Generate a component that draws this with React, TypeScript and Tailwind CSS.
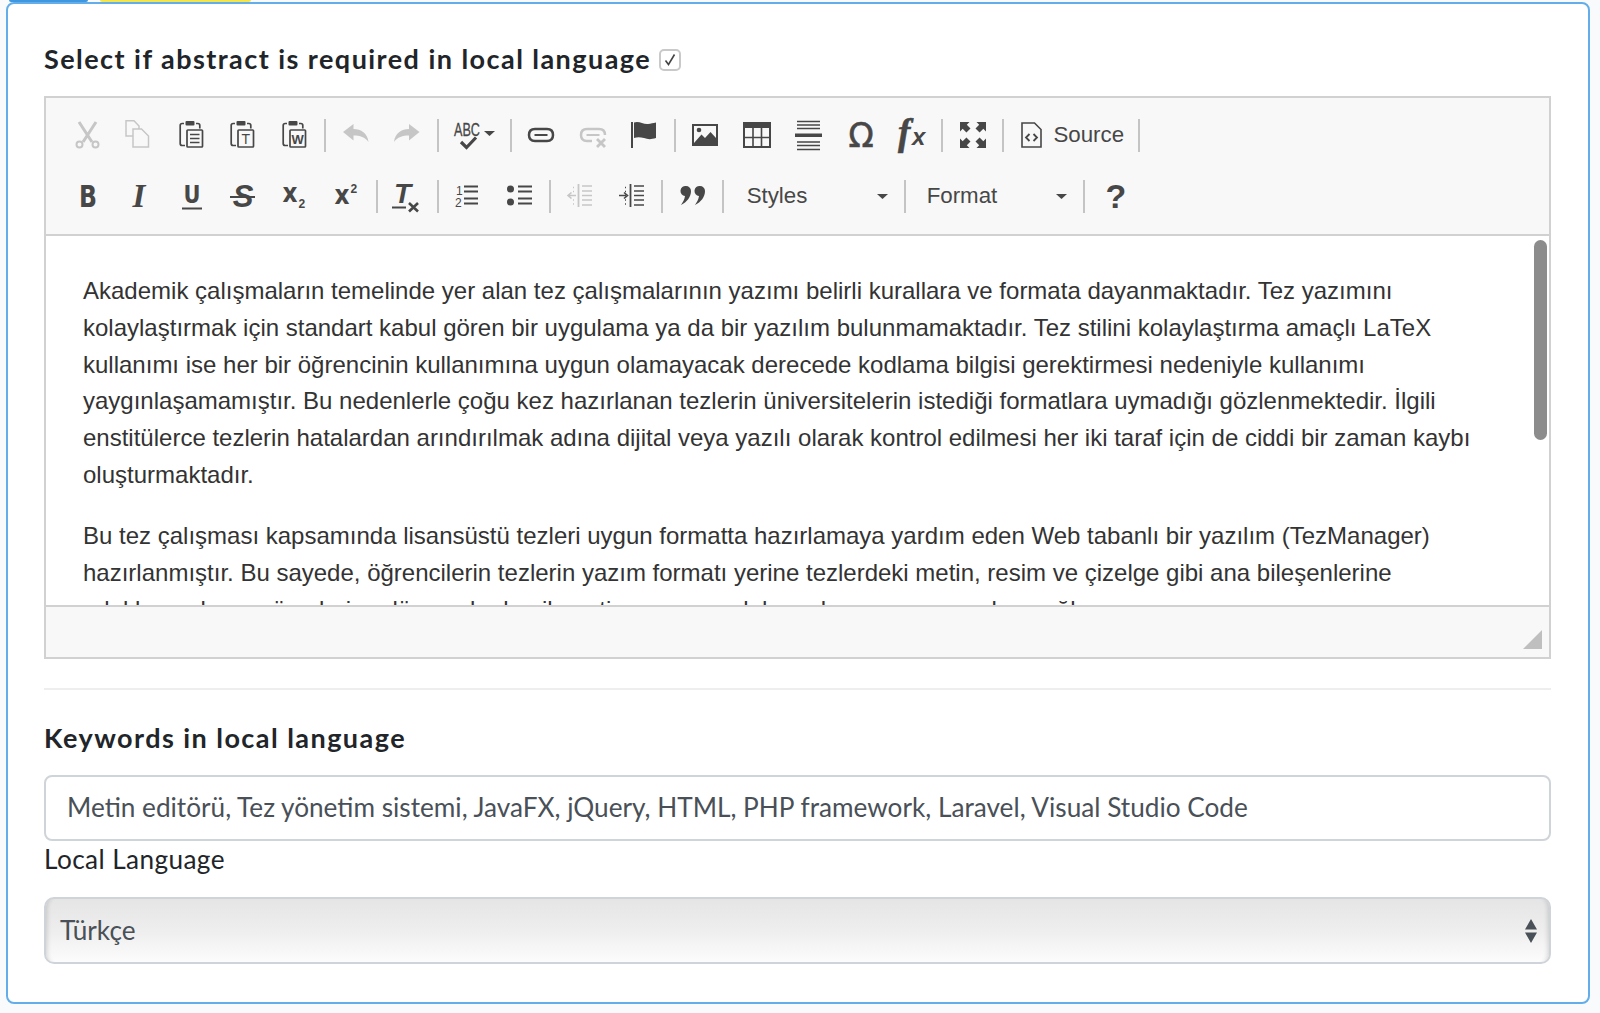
import type { ReactNode } from "react";

const DARK = "#474747";
const OFF = "#c6c6c6";

function Btn({ children, w = "w-[51.7px]" }: { children: ReactNode; w?: string }) {
  return <div className={`${w} h-[62px] flex items-center justify-center shrink-0`}>{children}</div>;
}

function Ic({ children, w = 32, h = 32 }: { children: ReactNode; w?: number; h?: number }) {
  return (
    <svg width={w} height={h} viewBox={`-3 -3 ${w} ${h}`} className="overflow-visible">
      {children}
    </svg>
  );
}

function Sep() {
  return <div className="mx-[3.5px] w-[2px] h-[33px] bg-[#c4c4c4] shrink-0" />;
}

function Clipboard({ children }: { children?: ReactNode }) {
  return (
    <Ic>
      <g transform="translate(0 -1.5)">
        <path d="M5 3H3.2Q1.2 3 1.2 5V23Q1.2 25 3.2 25H6M17 3h1.8Q20.8 3 20.8 5V8" fill="none" stroke={DARK} strokeWidth="1.7" />
        <rect x="6.5" y="0.5" width="9" height="4.5" rx="1" fill={DARK} />
        <rect x="8" y="9.5" width="15.5" height="17" rx="0.8" fill="none" stroke={DARK} strokeWidth="1.7" />
        {children}
      </g>
    </Ic>
  );
}

function Chain({ color, broken }: { color: string; broken?: boolean }) {
  return (
    <Ic>
      <path
        d={broken ? "M19 7H7Q1 7 1 13T7 19H12M19 7Q25 7 25 13" : "M7 7H19Q25 7 25 13T19 19H7Q1 19 1 13T7 7Z"}
        fill="none"
        stroke={color}
        strokeWidth="2.5"
      />
      <path d="M6.5 13H19.5" stroke={color} strokeWidth="2" />
      {broken && <path d="M17 17L25 25M25 17L17 25" stroke={color} strokeWidth="2.8" />}
    </Ic>
  );
}

function IndentLines({ color, arrow }: { color: string; arrow: "in" | "out" }) {
  return (
    <Ic>
      <path d="M11.5 1V24" stroke={color} strokeWidth="1.8" />
      <path d="M15 3H25M15 8H25M15 12.5H25M15 17H25M15 22H25" stroke={color} strokeWidth="1.5" />
      <path d="M6 4.5H8M6 8.5H8M6 17H8M6 21H8" stroke={color} strokeWidth="1.5" strokeDasharray="1 1" />
      {arrow === "in" ? (
        <path d="M0 12.5H7M5 9.5L8.5 12.5L5 15.5" fill="none" stroke={color} strokeWidth="1.6" />
      ) : (
        <path d="M9 12.5H2M4.5 9.5L1 12.5L4.5 15.5" fill="none" stroke={color} strokeWidth="1.6" />
      )}
    </Ic>
  );
}

function Caret() {
  return <path d="M0 0H11L5.5 5Z" fill={DARK} />;
}

function Combo({ label, w, pl, caretAt }: { label: string; w: string; pl: string; caretAt: string }) {
  return (
    <div className={`${w} ${pl} h-[62px] flex items-center justify-between shrink-0 text-[22.3px] text-[#474747] font-['Liberation_Sans',sans-serif]`}>
      <span>{label}</span>
      <svg width="11" height="5" viewBox="0 0 11 5" className={caretAt}>
        <Caret />
      </svg>
    </div>
  );
}

function App() {
  return (
    <div className="w-[1600px] h-[1013px] bg-[#f8fafc] overflow-hidden font-['Lato',sans-serif]">
      <div className="h-[2px] flex">
        <div className="ml-[9px] w-[79px] bg-[#3f97e0] rounded-b-sm" />
        <div className="ml-[12px] w-[151px] bg-[#f5e54a] rounded-b-sm" />
      </div>
      <div className="ml-[6px] w-[1584px] h-[1002px] bg-white border-2 border-[#63aeea] rounded-[8px] pl-[36px] pt-[40px]">
        <div className="h-[30px] mb-[22px] flex items-center">
          <span className="text-[27px] font-bold tracking-[1.45px] text-[#212529]">Select if abstract is required in local language</span>
          <span className="ml-[8px] mt-[2px] w-[22px] h-[22px] rounded-[5px] border-2 border-[#c9c9c9] bg-white flex items-center justify-center">
            <svg width="14" height="14" viewBox="0 0 14 14">
              <path d="M2.5 7.5L5.5 11.5L11.5 1.5" fill="none" stroke="#444" strokeWidth="1.6" />
            </svg>
          </span>
        </div>

        <div className="w-[1507px] border-2 border-[#d1d1d1] bg-[#f8f8f8]">
          <div className="h-[138px] pt-[6px] pl-[16.4px] border-b-2 border-[#d1d1d1]">
            <div className="flex items-center h-[62px]">
              <Btn>
                <Ic>
                  <circle cx="4.5" cy="22.5" r="3" fill="none" stroke={OFF} strokeWidth="2" />
                  <circle cx="20.5" cy="22.5" r="3" fill="none" stroke={OFF} strokeWidth="2" />
                  <path d="M4 0L17 20M21 0L8 20" stroke={OFF} strokeWidth="3" />
                </Ic>
              </Btn>
              <Btn>
                <Ic>
                  <g transform="translate(-2 -2)">
                    <path d="M8 16H1V0.8H9L14 6V9" fill="none" stroke={OFF} strokeWidth="1.5" />
                    <path d="M8 9H16.5L23.5 16V27H8Z" fill="none" stroke={OFF} strokeWidth="1.5" />
                  </g>
                </Ic>
              </Btn>
              <Btn>
                <Clipboard>
                  <path d="M11 14H20.5M11 18H20.5M11 22H20.5" stroke={DARK} strokeWidth="1.7" />
                </Clipboard>
              </Btn>
              <Btn>
                <Clipboard>
                  <text x="15.7" y="23.5" textAnchor="middle" fontSize="14" fill={DARK} className="font-['Liberation_Sans',sans-serif]">T</text>
                </Clipboard>
              </Btn>
              <Btn>
                <Clipboard>
                  <text x="15.7" y="23" textAnchor="middle" fontSize="13" fontWeight="700" fill={DARK} className="font-['Liberation_Sans',sans-serif]">W</text>
                </Clipboard>
              </Btn>
              <Sep />
              <Btn>
                <Ic>
                  <path d="M0 10L10.5 2V7C18 7 24.5 11 25.5 20C22 15 17 13.5 10.5 13.5V18.5Z" fill={OFF} />
                </Ic>
              </Btn>
              <Btn>
                <Ic>
                  <path d="M25.5 10L15 2V7C7.5 7 1 11 0 20C3.5 15 8.5 13.5 15 13.5V18.5Z" fill={OFF} />
                </Ic>
              </Btn>
              <Sep />
              <Btn w="w-[64px]">
                <Ic w={44}>
                  <text x="-1" y="14" fontSize="19" fill={DARK} stroke={DARK} strokeWidth="0.3" textLength="26" lengthAdjust="spacingAndGlyphs" className="font-['Liberation_Sans',sans-serif]">ABC</text>
                  <path d="M6 20L11.5 25.5L21 15.5" fill="none" stroke={DARK} strokeWidth="3.2" />
                  <g transform="translate(29 9)">
                    <Caret />
                  </g>
                </Ic>
              </Btn>
              <Sep />
              <Btn>
                <Chain color={DARK} />
              </Btn>
              <Btn>
                <Chain color={OFF} broken />
              </Btn>
              <Btn>
                <Ic>
                  <path d="M1 0V26" stroke={DARK} strokeWidth="2" />
                  <path d="M3 0.5C8 -1.5 12 2.5 17 2C20 1.8 22 1 25 0.5V16C20 17.5 17 17.5 13 16C9 15 6 15 3 16Z" fill={DARK} />
                </Ic>
              </Btn>
              <Sep />
              <Btn>
                <Ic>
                  <rect x="1" y="3" width="24" height="20" fill="none" stroke={DARK} strokeWidth="2" />
                  <circle cx="7" cy="8" r="2.3" fill={DARK} />
                  <path d="M2 21L9.5 12.5L13 16L18.5 10L24 16V22H2Z" fill={DARK} />
                </Ic>
              </Btn>
              <Btn>
                <Ic>
                  <rect x="-1" y="0" width="28" height="6" fill={DARK} />
                  <rect x="0" y="1" width="26" height="24" fill="none" stroke={DARK} strokeWidth="2" />
                  <path d="M0 15.5H26M9 5V25M17.5 5V25" stroke={DARK} strokeWidth="1.6" />
                </Ic>
              </Btn>
              <Btn>
                <Ic>
                  <path d="M2 -0.5H25M2 3H25M2 6.5H25M2 20H25M2 23.5H25M2 27.5H25" stroke={DARK} strokeWidth="1.5" />
                  <rect x="0" y="11.5" width="27" height="3.5" fill={DARK} />
                </Ic>
              </Btn>
              <Btn>
                <Ic>
                  <text x="14" y="25" textAnchor="middle" fontSize="33" fill={DARK} stroke={DARK} strokeWidth="0.6" className="font-['DejaVu_Sans',sans-serif]">Ω</text>
                </Ic>
              </Btn>
              <Btn>
                <Ic>
                  <text x="-1" y="23" fontSize="37" fontStyle="italic" fontWeight="700" fill={DARK} stroke={DARK} strokeWidth="0.6" className="font-['Liberation_Serif',serif]">f</text>
                  <text x="13" y="23" fontSize="24" fontStyle="italic" fontWeight="700" fill={DARK} className="font-['Liberation_Sans',sans-serif]">x</text>
                </Ic>
              </Btn>
              <Sep />
              <Btn>
                <Ic>
                  <path d="M0 0H9.5L6.8 2.7L10.5 6.4L6.4 10.5L2.7 6.8L0 9.5ZM26 0V9.5L23.3 6.8L19.6 10.5L15.5 6.4L19.2 2.7L16.5 0ZM0 26V16.5L2.7 19.2L6.4 15.5L10.5 19.6L6.8 23.3L9.5 26ZM26 26H16.5L19.2 23.3L15.5 19.6L19.6 15.5L23.3 19.2L26 16.5Z" fill={DARK} />
                </Ic>
              </Btn>
              <Sep />
              <div className="w-[127px] h-[62px] pl-[14px] flex items-center gap-[11px] shrink-0">
                <svg width="21" height="26" viewBox="0 0 21 26">
                  <path d="M1 1H13.5L20 7.5V25H1Z" fill="none" stroke={DARK} strokeWidth="1.6" />
                  <path d="M8.5 12L5 15.5L8.5 19M12.5 12L16 15.5L12.5 19" fill="none" stroke={DARK} strokeWidth="1.8" />
                </svg>
                <span className="text-[22.3px] text-[#474747] font-['Liberation_Sans',sans-serif]">Source</span>
              </div>
              <Sep />
            </div>
            <div className="flex items-center h-[62px] -mt-px">
              <Btn>
                <Ic>
                  <text x="4" y="24" fontSize="30" fontWeight="700" fill={DARK} textLength="18" lengthAdjust="spacingAndGlyphs" className="font-['DejaVu_Sans',sans-serif]">B</text>
                </Ic>
              </Btn>
              <Btn>
                <Ic>
                  <text x="12" y="24" textAnchor="middle" fontSize="33" fontStyle="italic" fontWeight="700" fill={DARK} className="font-['Liberation_Serif',serif]">I</text>
                </Ic>
              </Btn>
              <Btn>
                <Ic>
                  <text x="4.5" y="20" fontSize="25" fontWeight="700" fill={DARK} textLength="17" lengthAdjust="spacingAndGlyphs" className="font-['DejaVu_Sans',sans-serif]">U</text>
                  <path d="M3 25.5H23" stroke={DARK} strokeWidth="2" />
                </Ic>
              </Btn>
              <Btn>
                <Ic>
                  <text x="13" y="24" textAnchor="middle" fontSize="31" fontStyle="italic" fontWeight="700" fill={DARK} className="font-['Liberation_Sans',sans-serif]">S</text>
                  <path d="M0 14H25" stroke={DARK} strokeWidth="2" />
                </Ic>
              </Btn>
              <Btn>
                <Ic>
                  <text x="0.5" y="19" fontSize="26" fontWeight="700" fill={DARK} textLength="15" lengthAdjust="spacingAndGlyphs" className="font-['DejaVu_Sans',sans-serif]">x</text>
                  <text x="16.5" y="24.5" fontSize="12" fontWeight="700" fill={DARK} className="font-['Liberation_Sans',sans-serif]">2</text>
                </Ic>
              </Btn>
              <Btn>
                <Ic>
                  <text x="0.5" y="21" fontSize="26" fontWeight="700" fill={DARK} textLength="15" lengthAdjust="spacingAndGlyphs" className="font-['DejaVu_Sans',sans-serif]">x</text>
                  <text x="16.5" y="9.5" fontSize="12" fontWeight="700" fill={DARK} className="font-['Liberation_Sans',sans-serif]">2</text>
                </Ic>
              </Btn>
              <Sep />
              <Btn>
                <Ic>
                  <text x="0" y="20" fontSize="28" fontStyle="italic" fontWeight="700" fill={DARK} className="font-['Liberation_Sans',sans-serif]">T</text>
                  <path d="M-2 24.5H12" stroke={DARK} strokeWidth="2" />
                  <path d="M15 20L24 28.5M24 20L15 28.5" stroke={DARK} strokeWidth="2.6" />
                </Ic>
              </Btn>
              <Sep />
              <Btn>
                <Ic>
                  <text x="1" y="11.5" fontSize="12" fill={DARK} className="font-['Liberation_Sans',sans-serif]">1</text>
                  <text x="0" y="24" fontSize="12" fill={DARK} className="font-['Liberation_Sans',sans-serif]">2</text>
                  <path d="M9 3.5H23M9 8.5H23M9 15.5H23M9 20.5H23" stroke={DARK} strokeWidth="2" />
                </Ic>
              </Btn>
              <Btn>
                <Ic>
                  <circle cx="3.5" cy="6" r="3.5" fill={DARK} />
                  <circle cx="3.5" cy="19" r="3.5" fill={DARK} />
                  <path d="M11 3.5H25M11 8.5H25M11 15.5H25M11 20.5H25" stroke={DARK} strokeWidth="2" />
                </Ic>
              </Btn>
              <Sep />
              <Btn>
                <IndentLines color={OFF} arrow="out" />
              </Btn>
              <Btn>
                <IndentLines color={DARK} arrow="in" />
              </Btn>
              <Sep />
              <Btn>
                <Ic>
                  <path d="M6 3A5 5 0 0 1 11 8C11 14 7 19 1 22C3 19 4.5 16.5 5 13A5 5 0 0 1 6 3Z" fill={DARK} />
                  <path d="M20 3A5 5 0 0 1 25 8C25 14 21 19 15 22C17 19 18.5 16.5 19 13A5 5 0 0 1 20 3Z" fill={DARK} />
                </Ic>
              </Btn>
              <Sep />
              <Combo label="Styles" w="w-[173px]" pl="pl-[19px]" caretAt="mr-[13px]" />
              <Sep />
              <Combo label="Format" w="w-[170px]" pl="pl-[17px]" caretAt="mr-[13px]" />
              <Sep />
              <Btn>
                <Ic>
                  <text x="15" y="25" textAnchor="middle" fontSize="34" fontWeight="700" fill={DARK} className="font-['Liberation_Sans',sans-serif]">?</text>
                </Ic>
              </Btn>
            </div>
          </div>

          <div className="relative h-[369px] bg-white overflow-hidden pt-[37px] pl-[37px] text-[24px] leading-[36.8px] text-[#333] whitespace-nowrap font-['Liberation_Sans',sans-serif]">
            <p className="mb-[24.4px]">
              Akademik çalışmaların temelinde yer alan tez çalışmalarının yazımı belirli kurallara ve formata dayanmaktadır. Tez yazımını
              <br />
              kolaylaştırmak için standart kabul gören bir uygulama ya da bir yazılım bulunmamaktadır. Tez stilini kolaylaştırma amaçlı LaTeX
              <br />
              kullanımı ise her bir öğrencinin kullanımına uygun olamayacak derecede kodlama bilgisi gerektirmesi nedeniyle kullanımı
              <br />
              yaygınlaşamamıştır. Bu nedenlerle çoğu kez hazırlanan tezlerin üniversitelerin istediği formatlara uymadığı gözlenmektedir. İlgili
              <br />
              enstitülerce tezlerin hatalardan arındırılmak adına dijital veya yazılı olarak kontrol edilmesi her iki taraf için de ciddi bir zaman kaybı
              <br />
              oluşturmaktadır.
            </p>
            <p>
              Bu tez çalışması kapsamında lisansüstü tezleri uygun formatta hazırlamaya yardım eden Web tabanlı bir yazılım (TezManager)
              <br />
              hazırlanmıştır. Bu sayede, öğrencilerin tezlerin yazım formatı yerine tezlerdeki metin, resim ve çizelge gibi ana bileşenlerine
              <br />
              odaklanmaları ve üzerlerine düşen akademik metin yazımına daha çok zaman ayırmaları sağlanır.
            </p>
            <div className="absolute top-[4px] right-[2px] w-[13px] h-[200px] rounded-full bg-[#8c8c8c]" />
          </div>

          <div className="relative h-[52px] border-t-2 border-[#d1d1d1]">
            <svg width="19" height="19" viewBox="0 0 19 19" className="absolute right-[7px] bottom-[8px]">
              <path d="M19 0V19H0Z" fill="#bfbfbf" />
            </svg>
          </div>
        </div>

        <div className="w-[1507px] mt-[29px] border-t-2 border-[#eeeeee]" />

        <div className="mt-[33px] h-[30px] flex items-center text-[27px] font-bold tracking-[1.45px] text-[#212529]">Keywords in local language</div>
        <div className="mt-[22px] w-[1507px] h-[66px] rounded-[8px] border-2 border-[#ced4da] bg-white flex items-center pl-[21px] text-[26.2px] text-[#495057]">
          Metin editörü, Tez yönetim sistemi, JavaFX, jQuery, HTML, PHP framework, Laravel, Visual Studio Code
        </div>
        <div className="h-[35px] mt-px flex items-center text-[26.2px] tracking-[0.4px] text-[#212529]">Local Language</div>
        <div className="mt-[20px] w-[1507px] h-[67px] rounded-[10px] border-2 border-[#ced4da] bg-linear-to-b from-[#e5e5e5] via-[#eeeeee] to-[#fcfcfc] shadow-[inset_7px_0_5px_-6px_rgba(0,0,0,0.16),inset_-7px_0_5px_-6px_rgba(0,0,0,0.16)] flex items-center justify-between pl-[14px] pr-[12px] text-[26.2px] text-[#495057]">
          <span>Türkçe</span>
          <svg width="12" height="24" viewBox="0 0 12 24">
            <path d="M6 0L12 10.5H0ZM0 13.5H12L6 24Z" fill="#495057" />
          </svg>
        </div>
      </div>
    </div>
  );
}

export default App;
